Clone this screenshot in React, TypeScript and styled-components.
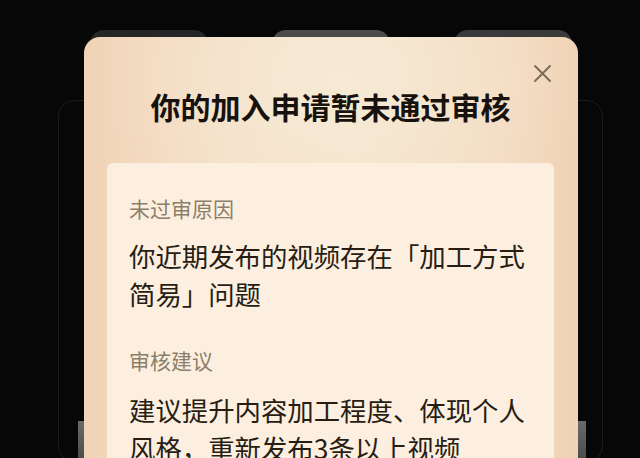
import React from 'react';
import styled, { createGlobalStyle } from 'styled-components';

const GlobalStyle = createGlobalStyle`
  html, body {
    margin: 0;
    padding: 0;
    background: #070707;
  }
  body {
    font-family: "Noto Sans CJK SC", "Noto Sans", sans-serif;
  }
`;

const Screen = styled.div`
  position: relative;
  width: 640px;
  height: 458px;
  overflow: hidden;
  background: #070707;
  display: flex;
  padding-left: 84px;
  box-sizing: border-box;
`;

/* the page behind the dialog, dimmed */
const Backdrop = styled.div`
  position: absolute;
  inset: 0;
  padding: 30px 0 0 58px;
  display: flex;
  flex-direction: column;
`;

const TabRow = styled.div`
  display: flex;
  gap: 64px;
  margin-left: 32px;
`;

const GhostTab = styled.div<{ $tone: string }>`
  width: 118px;
  height: 30px;
  border-radius: 14px 14px 0 0;
  background: ${p => p.$tone};
`;

const GhostFrame = styled.div`
  margin-top: 40px;
  width: 545px;
  height: 400px;
  box-sizing: border-box;
  border: 1.5px solid #1c1c1c;
  border-radius: 16px;
  padding: 320px 0 0 19px;
`;

const GhostText = styled.div`
  width: 508px;
  height: 40px;
  background: linear-gradient(#6a6a6a, #4a4a4a);
`;

const Dialog = styled.div`
  position: relative;
  margin-top: 37px;
  width: 494px;
  height: 460px;
  box-sizing: border-box;
  border-radius: 16px;
  background:
    radial-gradient(ellipse 240px 200px at 52% 10%, #f6ead5 0%, rgba(246, 234, 213, 0) 100%),
    linear-gradient(90deg, #f1d4b7 0%, #f4dec6 30%, #f5e2cb 55%, #f2d9bf 85%, #f0d3b5 100%);
  padding: 0 24px 0 23px;
  display: flex;
  flex-direction: column;
`;

const CloseButton = styled.button`
  position: absolute;
  top: 26px;
  right: 26px;
  width: 20px;
  height: 20px;
  padding: 0;
  border: none;
  background: transparent;
  display: flex;
  align-items: center;
  justify-content: center;
`;

const Title = styled.h1`
  margin: 0;
  height: 126px;
  padding-top: 47px;
  box-sizing: border-box;
  text-align: center;
  font-size: 30px;
  line-height: 44px;
  font-weight: 700;
  color: #17120d;
`;

const Panel = styled.div`
  background: #fcefe0;
  border-radius: 6px;
  padding: 31px 15px 0 22px;
  flex: 1;
  display: flex;
  flex-direction: column;
`;

const Label = styled.div<{ $gap?: number }>`
  font-size: 21px;
  line-height: 28px;
  color: #8c7e6a;
  margin-top: ${p => p.$gap ?? 0}px;
`;

const Body = styled.p<{ $gap?: number }>`
  margin: ${p => p.$gap ?? 15}px 0 0;
  font-size: 26.4px;
  line-height: 38px;
  color: #271d13;
`;

const CloseIcon = () => (
  <svg width="19" height="19" viewBox="0 0 19 19" fill="none">
    <path d="M2 2L17 17M17 2L2 17" stroke="#7b6d5b" strokeWidth="2" strokeLinecap="round" />
  </svg>
);

export default function App() {
  return (
    <>
      <GlobalStyle />
      <Screen>
        <Backdrop>
          <TabRow>
            <GhostTab $tone="#262626" />
            <GhostTab $tone="#4c4c4c" />
            <GhostTab $tone="#3a3a3a" />
          </TabRow>
          <GhostFrame>
            <GhostText />
          </GhostFrame>
        </Backdrop>
        <Dialog>
          <CloseButton aria-label="关闭">
            <CloseIcon />
          </CloseButton>
          <Title>你的加入申请暂未通过审核</Title>
          <Panel>
            <Label>未过审原因</Label>
            <Body>你近期发布的视频存在「加工方式简易」问题</Body>
            <Label $gap={33}>审核建议</Label>
            <Body $gap={17}>建议提升内容加工程度、体现个人风格，重新发布3条以上视频</Body>
          </Panel>
        </Dialog>
      </Screen>
    </>
  );
}
